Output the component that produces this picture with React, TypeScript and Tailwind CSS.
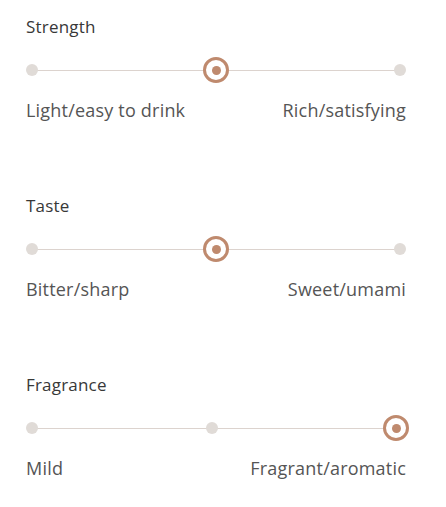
const scales = [
  { title: 'Strength', left: 'Light/easy to drink', right: 'Rich/satisfying', value: 1 },
  { title: 'Taste', left: 'Bitter/sharp', right: 'Sweet/umami', value: 1 },
  { title: 'Fragrance', left: 'Mild', right: 'Fragrant/aromatic', value: 2 },
];

function Point({ active }: { active: boolean }) {
  if (active) {
    return (
      <div className="relative -mx-[3px] flex h-[26px] w-[26px] items-center justify-center rounded-full border-[3px] border-[#bf8a6e] bg-white">
        <div className="h-[9px] w-[9px] rounded-full bg-[#bf8a6e]" />
      </div>
    );
  }
  return <div className="relative h-[12px] w-[12px] rounded-full bg-[#e0dbd7]" />;
}

function Scale({ title, left, right, value }: (typeof scales)[number]) {
  return (
    <div className="flex flex-col">
      <h3 className="text-[17px] leading-[24px] tracking-[0.2px] text-[#383838]">{title}</h3>
      <div className="relative mt-[18px] flex h-[26px] items-center justify-between">
        <div className="absolute left-[6px] right-[6px] top-[13px] h-px bg-[#dcd3ce]" />
        {[0, 1, 2].map((i) => (
          <Point key={i} active={i === value} />
        ))}
      </div>
      <div className="mt-[15px] flex justify-between text-[18px] leading-[24px] tracking-[0.2px] text-[#555]">
        <span>{left}</span>
        <span>{right}</span>
      </div>
    </div>
  );
}

export default function App() {
  return (
    <div className="min-h-[507px] bg-white px-[26px] pt-[15px] font-['Open_Sans',sans-serif]" style={{ width: 446 }}>
      <div className="flex w-[380px] flex-col gap-[72px]">
        {scales.map((s) => (
          <Scale key={s.title} {...s} />
        ))}
      </div>
    </div>
  );
}
